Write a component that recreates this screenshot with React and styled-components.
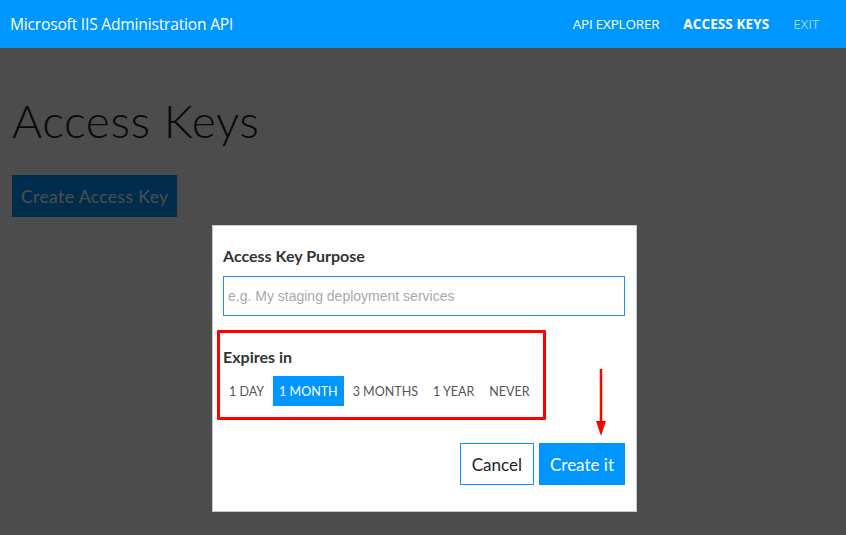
import React, { useState } from 'react'
import styled, { createGlobalStyle } from 'styled-components'

const GlobalStyle = createGlobalStyle`
  html, body {
    margin: 0;
    padding: 0;
    height: 100%;
    overflow: hidden;
  }
  body {
    font-family: 'Lato', 'Open Sans', sans-serif;
    background: #ffffff;
  }
`

const Page = styled.div`
  position: relative;
  width: 846px;
  height: 535px;
  overflow: hidden;
`

const NavBar = styled.header`
  height: 48px;
  background: #0096ff;
  display: flex;
  align-items: center;
  justify-content: space-between;
  padding: 0 27px 0 10px;
  font-family: 'Open Sans', 'Noto Sans', sans-serif;
  color: #fff;
`

const Brand = styled.div`
  font-size: 15.6px;
  letter-spacing: -0.2px;
`

const NavLinks = styled.nav`
  display: flex;
  gap: 24px;
`

const NavLink = styled.a`
  font-size: 13.5px;
  letter-spacing: ${p => (p.$active ? '0.1px' : '-0.2px')};
  color: ${p => (p.$muted ? 'rgba(255,255,255,0.6)' : '#fff')};
  font-weight: ${p => (p.$active ? 700 : 400)};
  text-decoration: none;
`

const Main = styled.main`
  padding: 45px 12px 0;
`

const Title = styled.h1`
  margin: 0 0 27px;
  font-size: 46px;
  font-weight: 300;
  letter-spacing: 0.6px;
  color: #222;
`

const PrimaryButton = styled.button`
  height: 42px;
  padding: 0 9px;
  border: none;
  background: #0096ff;
  color: #fff;
  font-family: inherit;
  font-size: 17.5px;
  letter-spacing: 0.4px;
  cursor: pointer;
`

const Overlay = styled.div`
  position: absolute;
  top: 48px;
  left: 0;
  right: 0;
  bottom: 0;
  background: rgba(0, 0, 0, 0.7);
`

const Dialog = styled.div`
  position: absolute;
  left: 212px;
  top: 225px;
  width: 425px;
  box-sizing: border-box;
  background: #fff;
  border: 1px solid #c8c8c8;
  padding: 20px 11px 26px 10px;
`

const Label = styled.div`
  font-size: 16px;
  font-weight: 700;
  color: #333;
  margin-bottom: ${p => (p.$tight ? '0' : '11px')};
`

const TextInput = styled.input`
  display: block;
  width: 100%;
  box-sizing: border-box;
  height: 40px;
  border: 1px solid #1e90ff;
  padding: 0 4px;
  font-family: 'Liberation Sans', Arial, sans-serif;
  font-size: 14px;
  outline: none;
  &::placeholder {
    color: #a9a9a9;
  }
`

const Highlight = styled.section`
  margin: 14px 79px 0 -6px;
  border: 3px solid #ff0000;
  border-radius: 1px;
  padding: 14px 3px 11px;
`

const Options = styled.div`
  display: flex;
  margin-top: 10px;
`

const Option = styled.button`
  height: 30px;
  padding: 0 6px;
  margin-right: 3px;
  border: none;
  background: ${p => (p.$selected ? '#0096ff' : 'transparent')};
  color: ${p => (p.$selected ? '#fff' : '#555')};
  font-family: inherit;
  font-size: 12.5px;
  cursor: pointer;
`

const Actions = styled.div`
  display: flex;
  justify-content: flex-end;
  gap: 5px;
  margin-top: 23px;
`

const ActionButton = styled.button`
  height: 42px;
  padding: 0 ${p => (p.$primary ? '10px' : '11px')};
  border: 1px solid #0096ff;
  background: ${p => (p.$primary ? '#0096ff' : '#fff')};
  color: ${p => (p.$primary ? '#fff' : '#222')};
  font-family: inherit;
  font-size: 17px;
  cursor: pointer;
`

const Arrow = styled.svg`
  position: absolute;
  left: 595px;
  top: 369px;
`

const periods = ['1 DAY', '1 MONTH', '3 MONTHS', '1 YEAR', 'NEVER']

export default function App() {
  const [period, setPeriod] = useState('1 MONTH')
  return (
    <Page>
      <GlobalStyle />
      <NavBar>
        <Brand>Microsoft IIS Administration API</Brand>
        <NavLinks>
          <NavLink>API EXPLORER</NavLink>
          <NavLink $active>ACCESS KEYS</NavLink>
          <NavLink $muted>EXIT</NavLink>
        </NavLinks>
      </NavBar>
      <Main>
        <Title>Access Keys</Title>
        <PrimaryButton>Create Access Key</PrimaryButton>
      </Main>
      <Overlay />
      <Dialog>
        <Label>Access Key Purpose</Label>
        <TextInput placeholder="e.g. My staging deployment services" />
        <Highlight>
          <Label $tight>Expires in</Label>
          <Options>
            {periods.map(p => (
              <Option key={p} $selected={p === period} onClick={() => setPeriod(p)}>
                {p}
              </Option>
            ))}
          </Options>
        </Highlight>
        <Actions>
          <ActionButton>Cancel</ActionButton>
          <ActionButton $primary>Create it</ActionButton>
        </Actions>
      </Dialog>
      <Arrow width="12" height="68" viewBox="0 0 12 68">
        <line x1="6" y1="0" x2="6" y2="56" stroke="#ff0000" strokeWidth="2.5" />
        <polygon points="1,52 11,52 6,67" fill="#ff0000" />
      </Arrow>
    </Page>
  )
}
